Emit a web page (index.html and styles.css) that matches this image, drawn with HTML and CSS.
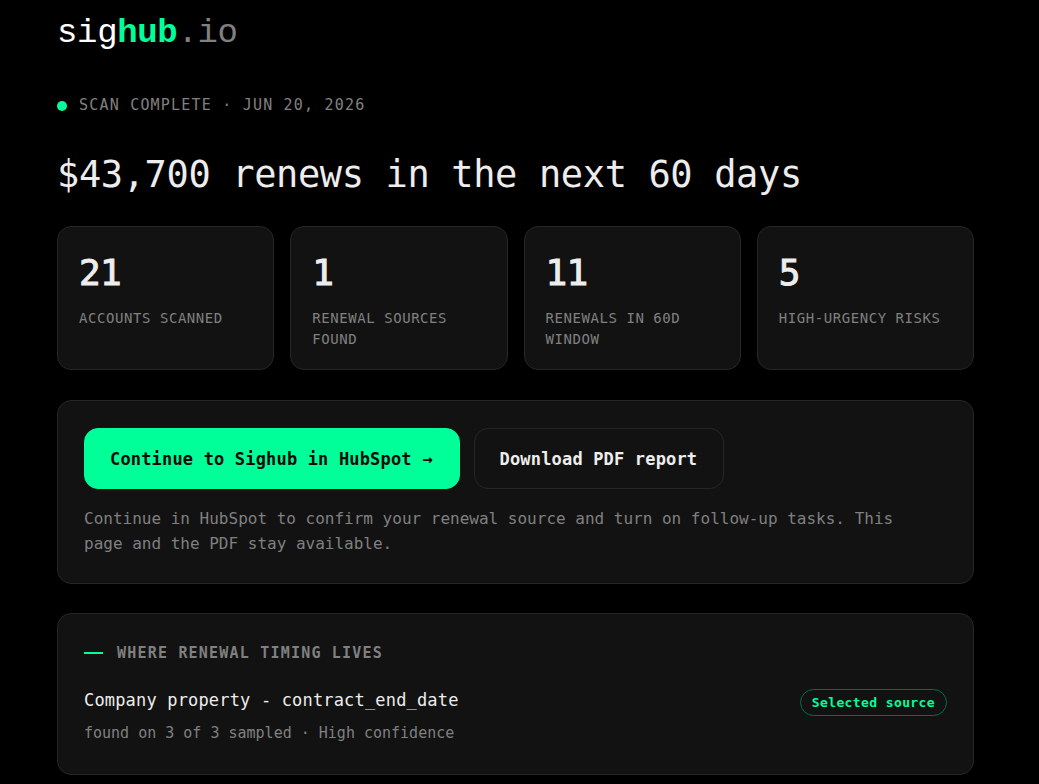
FILE: index.html
```html
<!DOCTYPE html>
<html lang="en">
<head>
<meta charset="utf-8">
<meta name="viewport" content="width=device-width, initial-scale=1">
<title>sighub.io – Scan complete</title>
<link rel="stylesheet" href="styles.css">
</head>
<body>
<main class="page">
  <header class="logo">sig<b class="logo-accent">hub</b><span class="logo-tld">.io</span></header>

  <p class="status"><span class="status-dot"></span>SCAN COMPLETE · JUN 20, 2026</p>
  <h1 class="headline">$43,700 renews in the next 60 days</h1>

  <section class="stats" aria-label="Scan totals">
    <div class="stat"><div class="stat-value">21</div><div class="stat-label">ACCOUNTS SCANNED</div></div>
    <div class="stat"><div class="stat-value">1</div><div class="stat-label">RENEWAL SOURCES FOUND</div></div>
    <div class="stat"><div class="stat-value">11</div><div class="stat-label">RENEWALS IN 60D WINDOW</div></div>
    <div class="stat"><div class="stat-value">5</div><div class="stat-label">HIGH-URGENCY RISKS</div></div>
  </section>

  <section class="panel">
    <div class="actions">
      <a class="button button-primary" href="#continue">Continue to Sighub in HubSpot →</a>
      <a class="button" href="#report">Download PDF report</a>
    </div>
    <p class="note">Continue in HubSpot to confirm your renewal source and turn on follow-up tasks. This page and the PDF stay available.</p>
  </section>

  <section class="panel">
    <h2 class="section-title">WHERE RENEWAL TIMING LIVES</h2>
    <div class="source">
      <div>
        <div class="source-name">Company property - contract_end_date</div>
        <div class="source-meta">found on 3 of 3 sampled · High confidence</div>
      </div>
      <span class="badge">Selected source</span>
    </div>
  </section>
</main>
</body>
</html>
```

FILE: styles.css
```css
:root {
  --green: #00ff99;
  --text: #ededed;
  --muted: #808080;
  --surface: #121212;
  --line: #262626;
}

* { box-sizing: border-box; }

body {
  margin: 0;
  background: #000;
  color: var(--text);
  font: 16px/25px "DejaVu Sans Mono", monospace;
}

.page {
  max-width: 1039px;
  margin: 0 auto;
  padding: 9px 65px 9px 57px;
}

.logo {
  font-family: "Liberation Mono", monospace;
  font-size: 34px;
  line-height: 48px;
  letter-spacing: -0.01em;
  color: #fff;
}
.logo-accent { color: var(--green); }
.logo-tld { color: var(--muted); }

.status {
  display: flex;
  align-items: center;
  gap: 12px;
  margin: 36px 0 0;
  color: var(--muted);
  font-size: 15px;
  line-height: 25px;
  letter-spacing: 0.08em;
}
.status-dot {
  width: 10px;
  height: 10px;
  border-radius: 50%;
  background: var(--green);
}

.headline {
  margin: 34px 0 29px;
  font-size: 37px;
  font-weight: 400;
  line-height: 45px;
  letter-spacing: -0.01em;
}

.stats {
  display: grid;
  grid-template-columns: repeat(4, 1fr);
  gap: 16px;
}
.stat {
  padding: 27px 21px 19px;
  background: var(--surface);
  border: 1px solid var(--line);
  border-radius: 14px;
}
.stat-value {
  font-size: 36px;
  line-height: 38px;
  letter-spacing: -0.02em;
  -webkit-text-stroke: 1px currentColor;
}
.stat-label {
  margin-top: 16px;
  color: var(--muted);
  font-size: 14px;
  line-height: 21px;
  letter-spacing: 0.04em;
}

.panel {
  margin-top: 30px;
  padding: 27px 26px;
  background: var(--surface);
  border: 1px solid var(--line);
  border-radius: 14px;
}
.panel + .panel { margin-top: 29px; }

.actions {
  display: flex;
  flex-wrap: wrap;
  gap: 14px;
}
.button {
  padding: 18px 26px 16px 25px;
  border: 1px solid var(--line);
  border-radius: 14px;
  color: var(--text);
  font-size: 17px;
  font-weight: 700;
  line-height: 25px;
  letter-spacing: 0.01em;
  text-decoration: none;
}
.button-primary {
  background: var(--green);
  border-color: var(--green);
  color: #0a0a0a;
}
.note {
  max-width: 840px;
  margin: 17px 0 0;
  color: var(--muted);
}

.section-title {
  display: flex;
  align-items: center;
  gap: 14px;
  margin: 0 0 21px;
  color: var(--muted);
  font-size: 15px;
  line-height: 24px;
  letter-spacing: 0.08em;
}
.section-title::before {
  content: "";
  width: 19px;
  height: 2px;
  background: var(--green);
}

.source {
  display: flex;
  justify-content: space-between;
  align-items: flex-start;
  gap: 16px;
  padding-bottom: 2px;
}
.source-name {
  font-size: 17px;
  line-height: 28px;
  letter-spacing: 0.01em;
}
.source-meta {
  margin-top: 7px;
  color: var(--muted);
  font-size: 15px;
  line-height: 24px;
}
.badge {
  flex: none;
  margin-top: 3px;
  padding: 2px 11px;
  border: 1px solid #0b6b46;
  border-radius: 14px;
  color: var(--green);
  font-size: 13px;
  font-weight: 700;
  line-height: 21px;
  letter-spacing: 0.03em;
}
```
